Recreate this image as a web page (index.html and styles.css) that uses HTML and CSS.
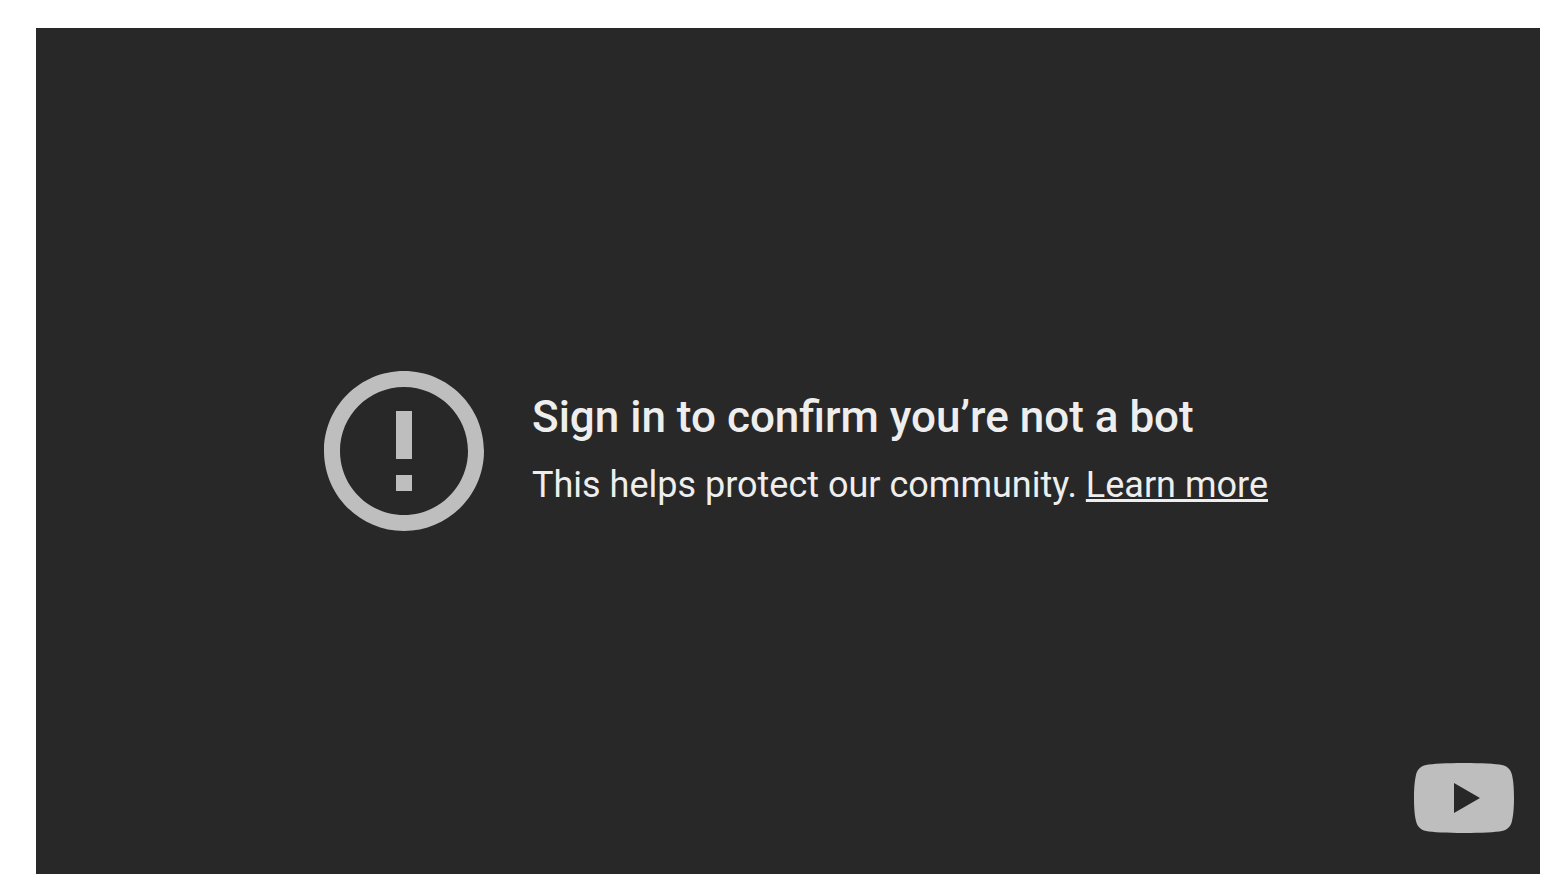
FILE: index.html
```html
<!DOCTYPE html>
<html lang="en">
<head>
<meta charset="utf-8">
<title>Sign in to confirm</title>
<link rel="stylesheet" href="styles.css">
</head>
<body>
<main class="player">
  <section class="message">
    <svg class="alert-icon" viewBox="2 2 20 20" aria-hidden="true"><path d="M11 15h2v2h-2zm0-8h2v6h-2zm.99-5C6.47 2 2 6.48 2 12s4.47 10 9.99 10C17.52 22 22 17.52 22 12S17.52 2 11.99 2zM12 20c-4.42 0-8-3.58-8-8s3.58-8 8-8 8 3.58 8 8-3.58 8-8 8z"/></svg>
    <div class="copy">
      <h1 class="title">Sign in to confirm you’re not a bot</h1>
      <p class="detail">This helps protect our community. <a class="link" href="#">Learn more</a></p>
    </div>
  </section>
  <a class="logo" href="#" aria-label="YouTube">
    <svg class="logo-icon" viewBox="0 0 100 70" aria-hidden="true"><path fill-rule="evenodd" d="M50 0C67 0 82 .8 88 2C93.500 3.200 96.800 6.500 98 12C99.500 18 100 27 100 35C100 43 99.500 52 98 58C96.800 63.500 93.500 66.800 88 68C82 69.200 67 70 50 70C33 70 18 69.200 12 68C6.500 66.800 3.200 63.500 2 58C.5 52 0 43 0 35C0 27 .5 18 2 12C3.200 6.500 6.500 3.200 12 2C18 .8 33 0 50 0ZM40 20V50L66 35Z"/></svg>
  </a>
</main>
</body>
</html>
```
FILE: styles.css
```css
* {
  box-sizing: border-box;
}

body {
  margin: 0;
  background: #fff;
  font-family: Roboto, "Liberation Sans", sans-serif;
}

.player {
  position: relative;
  display: flex;
  align-items: center;
  justify-content: center;
  height: calc(100vh - 28px);
  margin: 28px 2px 0 36px;
  padding-left: 16px;
  background: #282828;
  color: #eee;
}

.message {
  display: flex;
  align-items: center;
  gap: 48px;
}

.alert-icon {
  flex: none;
  width: 160px;
  height: 160px;
  fill: #bebebe;
}

.copy {
  padding-bottom: 4px;
}

.title {
  margin: 0;
  font-size: 44px;
  font-weight: 500;
  line-height: 56px;
}

.detail {
  margin: 16px 0 0;
  font-size: 36px;
  line-height: 48px;
}

.link {
  color: inherit;
  text-decoration: underline;
  text-decoration-thickness: 3px;
}

.logo {
  position: absolute;
  right: 26px;
  bottom: 41px;
}

.logo-icon {
  display: block;
  width: 100px;
  height: 70px;
  fill: #bebebe;
}
```
